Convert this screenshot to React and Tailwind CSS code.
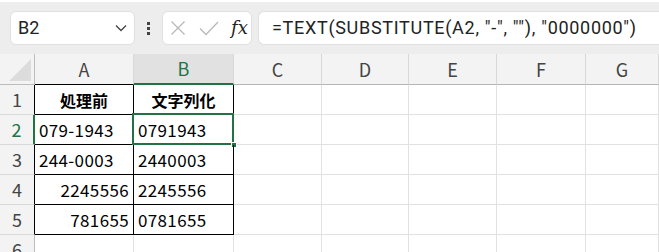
import React from "react";

const GREEN = "border-[#217346]";

const cols = ["A", "B", "C", "D", "E", "F", "G"];
const colW = ["w-[99px]", "w-[100px]", "w-[88px]", "w-[87px]", "w-[88px]", "w-[89px]", "flex-1"];

const rows = [
  { n: 1, a: "処理前", b: "文字列化", head: true },
  { n: 2, a: "079-1943", b: "0791943" },
  { n: 3, a: "244-0003", b: "2440003" },
  { n: 4, a: "2245556", b: "2245556", right: true },
  { n: 5, a: "781655", b: "0781655", right: true },
  { n: 6 },
];

const XIcon = () => (
  <svg className="w-[16px] h-[16px]" viewBox="0 0 16 16" fill="none" stroke="#b9b9b9" strokeWidth="1.3">
    <path d="M1.5 1.5l13 13M14.5 1.5l-13 13" />
  </svg>
);

const CheckIcon = () => (
  <svg className="w-[20px] h-[16px]" viewBox="0 0 20 16" fill="none" stroke="#b9b9b9" strokeWidth="1.3">
    <path d="M1 8.5l6 6L19 2" />
  </svg>
);

export default function App() {
  return (
    <div className="w-[659px] h-[252px] overflow-hidden bg-white font-['Noto_Sans_CJK_JP',sans-serif] text-[16px]">
      {/* ─── Formula toolbar ─── */}
      <div className="h-[2px] bg-white shadow-[0_1px_2px_rgba(0,0,0,0.15)]" />
      <div className="h-[52px] bg-[#ededed] flex items-center pl-[10px] gap-0">
        <div className="w-[125px] h-[34px] bg-white rounded-[6px] border border-[#e0e0e0] flex items-center justify-between pl-[7px] pr-[7px]">
          <span className="font-['Roboto',sans-serif] text-[18px] text-[#222] leading-none">B2</span>
          <svg className="w-[12px] h-[8px]" viewBox="0 0 12 8" fill="none" stroke="#444" strokeWidth="1.3">
            <path d="M1 1.5l5 5 5-5" />
          </svg>
        </div>
        <div className="w-[27px] flex flex-col items-center gap-[2px]">
          <span className="w-[3px] h-[3px] bg-[#444]" />
          <span className="w-[3px] h-[3px] bg-[#444]" />
          <span className="w-[3px] h-[3px] bg-[#444]" />
        </div>
        <div className="w-[90px] h-[34px] bg-white rounded-[6px] border border-[#e0e0e0] flex items-center pl-[7px] gap-[13px]">
          <XIcon />
          <CheckIcon />
          <span className="font-['DejaVu_Serif',serif] italic text-[18px] text-[#222] leading-none ml-[-1px]">fx</span>
        </div>
        <div className="ml-[6px] flex-1 h-[34px] bg-white rounded-l-[6px] border border-r-0 border-[#e0e0e0] flex items-center pl-[13px]">
          <span className="font-['Roboto',sans-serif] text-[18px] tracking-[0.7px] text-[#222] leading-none whitespace-nowrap">
            =TEXT(SUBSTITUTE(A2, "-", ""), "0000000")
          </span>
        </div>
      </div>

      {/* ─── Column headers ─── */}
      <div className="flex h-[31px] bg-[#f3f3f3]">
        <div className="w-[35px] border-r border-b border-[#bdbdbd] relative overflow-hidden">
          <svg className="absolute right-[3px] bottom-[3px] w-[22px] h-[22px]" viewBox="0 0 22 22">
            <path d="M22 0V22H0Z" fill="#dcdcdc" />
          </svg>
        </div>
        {cols.map((c, i) => (
          <div
            key={c}
            className={`${colW[i]} flex items-center justify-center border-r border-[#d8d8d8] ${
              c === "B"
                ? "bg-[#e1e1e1] border-b-2 border-b-[#217346] text-[#217346]"
                : c === "A"
                ? "border-b border-b-black text-[#444]"
                : "border-b border-b-[#b5b5b5] text-[#444]"
            } font-['Noto_Sans_CJK_JP',sans-serif] text-[18px]`}
          >
            {c}
          </div>
        ))}
      </div>

      {/* ─── Grid rows ─── */}
      {rows.map((r) => {
        const inTable = r.n <= 5;
        return (
          <div key={r.n} className="flex h-[30px]">
            <div
              className={`w-[35px] flex items-center justify-center bg-[#f3f3f3] border-b border-[#d8d8d8] text-[18px] ${
                r.n === 2
                  ? "bg-[#e1e1e1] text-[#217346] border-r-2 border-r-[#217346]"
                  : inTable
                  ? "text-[#444] border-r border-r-black"
                  : "text-[#444] border-r border-r-[#bdbdbd]"
              }`}
            >
              {r.n}
            </div>
            {/* A */}
            <div
              className={`w-[99px] flex items-center px-[4px] text-black ${
                r.head ? "justify-center font-bold text-[16px]" : "text-[17px] tracking-[0.35px]"
              } ${r.right ? "justify-end" : ""} ${
                inTable ? "border-r border-b border-black" : "border-r border-b border-[#e1e1e1]"
              }`}
            >
              {r.a}
            </div>
            {/* B */}
            <div
              className={`w-[100px] relative flex items-center px-[4px] text-black ${
                r.head ? "justify-center font-bold text-[16px]" : "text-[17px] tracking-[0.35px]"
              } ${inTable ? "border-r border-b border-black" : "border-r border-b border-[#e1e1e1]"}`}
            >
              {r.b}
              {r.n === 2 && (
                <>
                  <div className={`absolute -left-[2px] -top-[2px] -right-[1px] -bottom-[1px] border-2 ${GREEN}`} />
                  <div className="absolute -right-[4px] -bottom-[4px] w-[6px] h-[6px] bg-[#217346] border border-white" />
                </>
              )}
            </div>
            {colW.slice(2).map((w, i) => (
              <div key={i} className={`${w} border-r border-b border-[#e1e1e1]`} />
            ))}
          </div>
        );
      })}
    </div>
  );
}
